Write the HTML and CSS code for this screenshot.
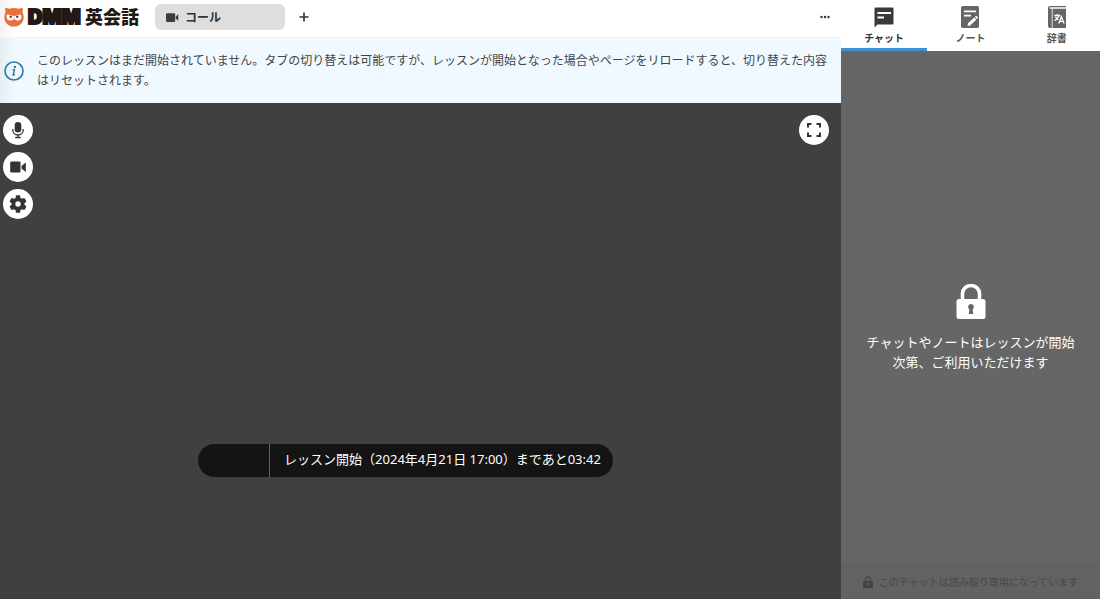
FILE: index.html
```
<!DOCTYPE html>
<html lang="ja">
<head>
<meta charset="utf-8">
<meta name="viewport" content="width=device-width, initial-scale=1">
<title>DMM英会話</title>
<link rel="stylesheet" href="styles.css">
</head>
<body class="app">
<main class="main">
  <header class="topbar">
    <a class="brand" href="#">
      <svg class="brand-owl" viewBox="0 0 20 20" aria-hidden="true">
        <path fill="#e8703c" d="M1.200.8Q3.500 1.500 5.500 1.700q4.500-1.200 9 0Q16.500 1.500 18.800.8q.2 2.200-.4 4 1.300 2.300 1.300 5.400c0 5.400-4.300 9.400-9.700 9.400S.3 15.600.3 10.200Q.3 7.100 1.600 4.800 1 3 1.200.8z"/>
        <circle cx="6.300" cy="9.800" r="3.700" fill="#fff"/><circle cx="13.700" cy="9.800" r="3.700" fill="#fff"/>
        <path fill="#e8703c" d="M2 7.600q4.500-.3 8 1.600 3.500-1.900 8-1.600V4H2z"/>
        <circle cx="6.800" cy="9.800" r="1.200" fill="#6a3c28"/><circle cx="13.200" cy="9.800" r="1.200" fill="#6a3c28"/>
        <path fill="#fff3c9" d="M9.200 11.300h1.600L10 13.200z"/>
      </svg>
      <span class="brand-dmm">DMM</span><span class="brand-name">英会話</span>
    </a>
    <button class="call-tab" type="button">
      <svg class="icon-cam" viewBox="0 0 16 12" aria-hidden="true"><rect y="1" width="10.500" height="10" rx="1.200"/><path d="M11.200 5.100 14 2v8l-2.800-3.100z"/></svg>
      コール
    </button>
    <button class="plain-button" type="button" aria-label="タブを追加">
      <svg class="icon-plus" viewBox="0 0 10 10" aria-hidden="true"><path d="M5 .5v9M.5 5h9"/></svg>
    </button>
    <button class="plain-button more" type="button" aria-label="メニュー">
      <svg class="icon-more" viewBox="0 0 10 4" aria-hidden="true"><circle cx="1.500" cy="2" r="1.200"/><circle cx="5" cy="2" r="1.200"/><circle cx="8.500" cy="2" r="1.200"/></svg>
    </button>
  </header>
  <div class="notice" role="status">
    <svg class="icon-info" viewBox="0 0 20 20" aria-hidden="true"><circle cx="10" cy="10" r="9" fill="none" stroke="#2e78a8" stroke-width="1.600"/><circle cx="10.900" cy="6" r="1.200" fill="#2e78a8"/><path d="M8.600 8.700h1.800l-1.200 5.200h1.600" fill="none" stroke="#2e78a8" stroke-width="1.500"/></svg>
    <p class="notice-text">このレッスンはまだ開始されていません。タブの切り替えは可能ですが、レッスンが開始となった場合やページをリロードすると、切り替えた内容はリセットされます。</p>
  </div>
  <section class="stage">
    <div class="stage-top">
      <div class="controls">
        <button class="round-button" type="button" aria-label="マイク">
          <svg class="icon-control" viewBox="0 0 18 18" aria-hidden="true"><rect x="5.700" y="1" width="6.600" height="10.500" rx="3.300"/><path d="M3.800 8v1c0 2.900 2.200 5 5.200 5s5.200-2.100 5.200-5V8M9 14v2.500M6.200 16.500h5.600" fill="none" stroke="#333" stroke-width="1.300"/></svg>
        </button>
        <button class="round-button" type="button" aria-label="カメラ">
          <svg class="icon-control" viewBox="0 0 18 18" aria-hidden="true"><rect x="1.200" y="3.500" width="10.300" height="11" rx="1"/><path d="M12.500 8 16.800 4.500v9.500l-4.300-3.500z"/></svg>
        </button>
        <button class="round-button" type="button" aria-label="設定">
          <svg class="icon-control" viewBox="2 2 20 20" aria-hidden="true"><path fill-rule="evenodd" d="M19.140 12.940c.04-.3.06-.61.06-.94s-.02-.64-.07-.94l2.030-1.580a.49.49 0 0 0 .12-.61l-1.920-3.320a.49.49 0 0 0-.59-.22l-2.390.96a7 7 0 0 0-1.620-.94l-.36-2.540a.48.48 0 0 0-.48-.41h-3.840a.48.48 0 0 0-.47.41l-.36 2.540a7.300 7.300 0 0 0-1.620.94l-2.390-.96a.49.49 0 0 0-.59.22L2.740 8.870a.48.48 0 0 0 .12.610l2.030 1.580a6 6 0 0 0 0 1.880l-2.030 1.580a.49.49 0 0 0-.12.610l1.920 3.320c.12.220.37.290.59.220l2.390-.96c.5.380 1.030.7 1.620.94l.36 2.540c.05.240.24.410.48.410h3.840c.24 0 .44-.17.47-.41l.36-2.540a7 7 0 0 0 1.620-.94l2.390.96c.22.080.47 0 .59-.22l1.920-3.320a.48.48 0 0 0-.12-.61zM12 15a3 3 0 1 1 0-6 3 3 0 0 1 0 6z"/></svg>
        </button>
      </div>
      <button class="round-button" type="button" aria-label="全画面">
        <svg class="icon-control" viewBox="0 0 18 18" aria-hidden="true"><path d="M3 6.500V3h3.500M11.500 3H15v3.500M15 11.500V15h-3.500M6.500 15H3v-3.500" fill="none" stroke="#333" stroke-width="2"/></svg>
      </button>
    </div>
    <div class="countdown">
      <div class="countdown-side"></div>
      <p class="countdown-text">レッスン開始（2024年4月21日 17:00）まであと03:42</p>
    </div>
  </section>
</main>
<aside class="side">
  <nav class="side-tabs" role="tablist">
    <button class="side-tab side-tab-active" type="button" role="tab" aria-selected="true">
      <svg class="icon-tab" viewBox="0 0 22 24" aria-hidden="true"><path fill="#3a3a3a" d="M2.500 2.500h17a1 1 0 0 1 1 1v15a1 1 0 0 1-1 1H4.500L1.500 22.500v-19a1 1 0 0 1 1-1z"/><path d="M4.500 8h13.500M4.500 12.500h6.500" stroke="#fff" stroke-width="2"/></svg>
      チャット
    </button>
    <button class="side-tab" type="button" role="tab" aria-selected="false">
      <svg class="icon-tab" viewBox="0 0 22 24" aria-hidden="true"><rect x="2" y="1" width="18" height="22" rx="1.800" fill="#666"/><path d="M5 6.300h12M5 10.700h7" stroke="#fff" stroke-width="1.800"/><path fill="#fff" d="m9 18.200 6.200-5.700 2.100 2.200-6.200 5.800L8.600 21zM15.800 12l1-1q.4-.3.800 0l1.300 1.300q.3.400 0 .8l-1 1z"/></svg>
      ノート
    </button>
    <button class="side-tab" type="button" role="tab" aria-selected="false">
      <svg class="icon-tab" viewBox="0 0 22 24" aria-hidden="true"><path fill="#666" d="M4 1h16v1.200H4.200c-1 0-1 1.600 0 1.600H20V23H4a2 2 0 0 1-2-2V3a2 2 0 0 1 2-2z"/><path d="M6.200 4v19" stroke="#fff" stroke-width=".8"/><path d="M8.300 10.500h6M11.200 9v1.500M13 10.500c-.7 2.500-2.200 4-4.400 5.200M9.400 11.800c.8 1.300 1.700 2.100 2.800 2.700M12.700 18.500l2.700-6.700 2.700 6.700M13.600 16.300h3.600" fill="none" stroke="#fff" stroke-width="1.300"/></svg>
      辞書
    </button>
  </nav>
  <div class="locked">
    <svg class="icon-lock" viewBox="0 0 30 36" aria-hidden="true"><path d="M6.500 17V9.500a8.500 8 0 0 1 17 0V17" fill="none" stroke="#fff" stroke-width="3.600"/><path fill="#fff" fill-rule="evenodd" d="M3 15h24a2.500 2.500 0 0 1 2.500 2.500v15A2.500 2.500 0 0 1 27 35H3a2.500 2.500 0 0 1-2.500-2.500v-15A2.500 2.500 0 0 1 3 15zm12 5a3 3 0 0 0-1.700 5.400L12.800 30h4.400l-.5-4.600A3 3 0 0 0 15 20z"/></svg>
    <p class="locked-text">チャットやノートはレッスンが開始<br>次第、ご利用いただけます</p>
  </div>
  <footer class="readonly">
    <svg class="icon-lock-small" viewBox="0 0 10 12" aria-hidden="true"><path d="M2.500 6V3.200a2.500 2.300 0 0 1 5 0V6" fill="none" stroke="#444" stroke-width="1.300"/><path fill="#444" fill-rule="evenodd" d="M1 5h8q1 0 1 1v5q0 1-1 1H1q-1 0-1-1V6q0-1 1-1zm4 2-.8 1 .4 2h.8l.4-2z"/></svg>
    <span>このチャットは読み取り専用になっています</span>
  </footer>
</aside>
</body>
</html>
```
FILE: styles.css
```
* {
  box-sizing: border-box;
}

.app {
  display: flex;
  min-height: 100vh;
  margin: 0;
  font-family: "Noto Sans", "Noto Sans CJK JP", sans-serif;
  font-size: 12px;
  color: #333;
  background: #666;
}

button {
  padding: 0;
  border: 0;
  background: none;
  font: inherit;
  color: inherit;
  cursor: pointer;
}

p {
  margin: 0;
}

svg {
  display: block;
  flex: none;
}

.main {
  display: flex;
  flex: 1;
  flex-direction: column;
  min-width: 0;
}

.topbar {
  display: flex;
  align-items: center;
  height: 38px;
  padding: 0 11px 3px 4px;
  border-bottom: 1px solid #eef3f6;
  background: linear-gradient(90deg, #f3f3f5, #fff 16px);
}

.brand {
  display: flex;
  align-items: center;
  width: 151px;
  color: #221815;
  text-decoration: none;
  white-space: nowrap;
}

.brand-owl {
  width: 20px;
  height: 20px;
  margin-right: 4px;
}

.brand-dmm {
  width: 57px;
  font: 900 20px/24px Inter, sans-serif;
  -webkit-text-stroke: 2px #221815;
}

.brand-name {
  font-size: 18px;
  font-weight: 900;
  line-height: 24px;
}

.call-tab {
  display: flex;
  align-items: center;
  gap: 5px;
  width: 130px;
  height: 26px;
  padding: 0 11px;
  border-radius: 6px;
  background: #dedede;
  font-weight: 700;
}

.icon-cam {
  width: 14px;
  height: 11px;
  fill: #3c3c3c;
}

.plain-button {
  display: grid;
  place-items: center;
  width: 26px;
  height: 26px;
  margin-left: 6px;
}

.more {
  width: 10px;
  margin-left: auto;
}

.icon-plus {
  width: 10px;
  height: 10px;
  stroke: #333;
  stroke-width: 1.6;
}

.icon-more {
  width: 10px;
  height: 4px;
  fill: #333;
}

.notice {
  display: flex;
  align-items: center;
  gap: 13px;
  padding: 13px 10px 12px 4px;
  background: linear-gradient(90deg, #e6eef4, #f0f9ff 16px);
}

.icon-info {
  width: 20px;
  height: 20px;
}

.notice-text {
  line-height: 20px;
  color: #444;
}

.stage {
  display: flex;
  flex: 1;
  flex-direction: column;
  justify-content: space-between;
  padding: 12px 12px 122px 3px;
  background: #404040;
}

.stage-top {
  display: flex;
  align-items: flex-start;
  justify-content: space-between;
}

.controls {
  display: flex;
  flex-direction: column;
  gap: 7px;
}

.round-button {
  display: grid;
  place-items: center;
  width: 30px;
  height: 30px;
  border-radius: 50%;
  background: #fff;
}

.icon-control {
  width: 18px;
  height: 18px;
  fill: #333;
}

.countdown {
  display: flex;
  align-self: center;
  margin-right: 21px;
  border-radius: 17px;
  background: #141414;
  color: #fff;
}

.countdown-side {
  width: 72px;
  border-right: 1px solid #666;
}

.countdown-text {
  padding: 5px 12px 8px 14px;
  font-size: 13px;
  line-height: 20px;
}

.side {
  display: flex;
  flex-direction: column;
  width: 259px;
}

.side-tabs {
  display: flex;
  height: 51px;
  background: #fff;
}

.side-tab {
  display: flex;
  flex: 1;
  flex-direction: column;
  align-items: center;
  gap: 2px;
  padding-top: 5px;
  border-bottom: 3px solid transparent;
  color: #555;
  font-size: 10px;
  font-weight: 700;
  line-height: 14px;
}

.side-tab-active {
  border-bottom-color: #4190d0;
  color: #333;
}

.icon-tab {
  width: 22px;
  height: 24px;
}

.locked {
  display: flex;
  flex: 1;
  flex-direction: column;
  align-items: center;
  justify-content: center;
  gap: 12px;
  padding-top: 42px;
  color: #fff;
  text-align: center;
}

.icon-lock {
  width: 30px;
  height: 36px;
}

.locked-text {
  font-size: 13px;
  line-height: 20px;
  white-space: nowrap;
}

.readonly {
  display: flex;
  align-items: center;
  justify-content: center;
  gap: 6px;
  height: 37px;
  padding-top: 2px;
  background: #626262;
  color: #484848;
  font-size: 10px;
  white-space: nowrap;
}

.icon-lock-small {
  width: 10px;
  height: 12px;
}
```
